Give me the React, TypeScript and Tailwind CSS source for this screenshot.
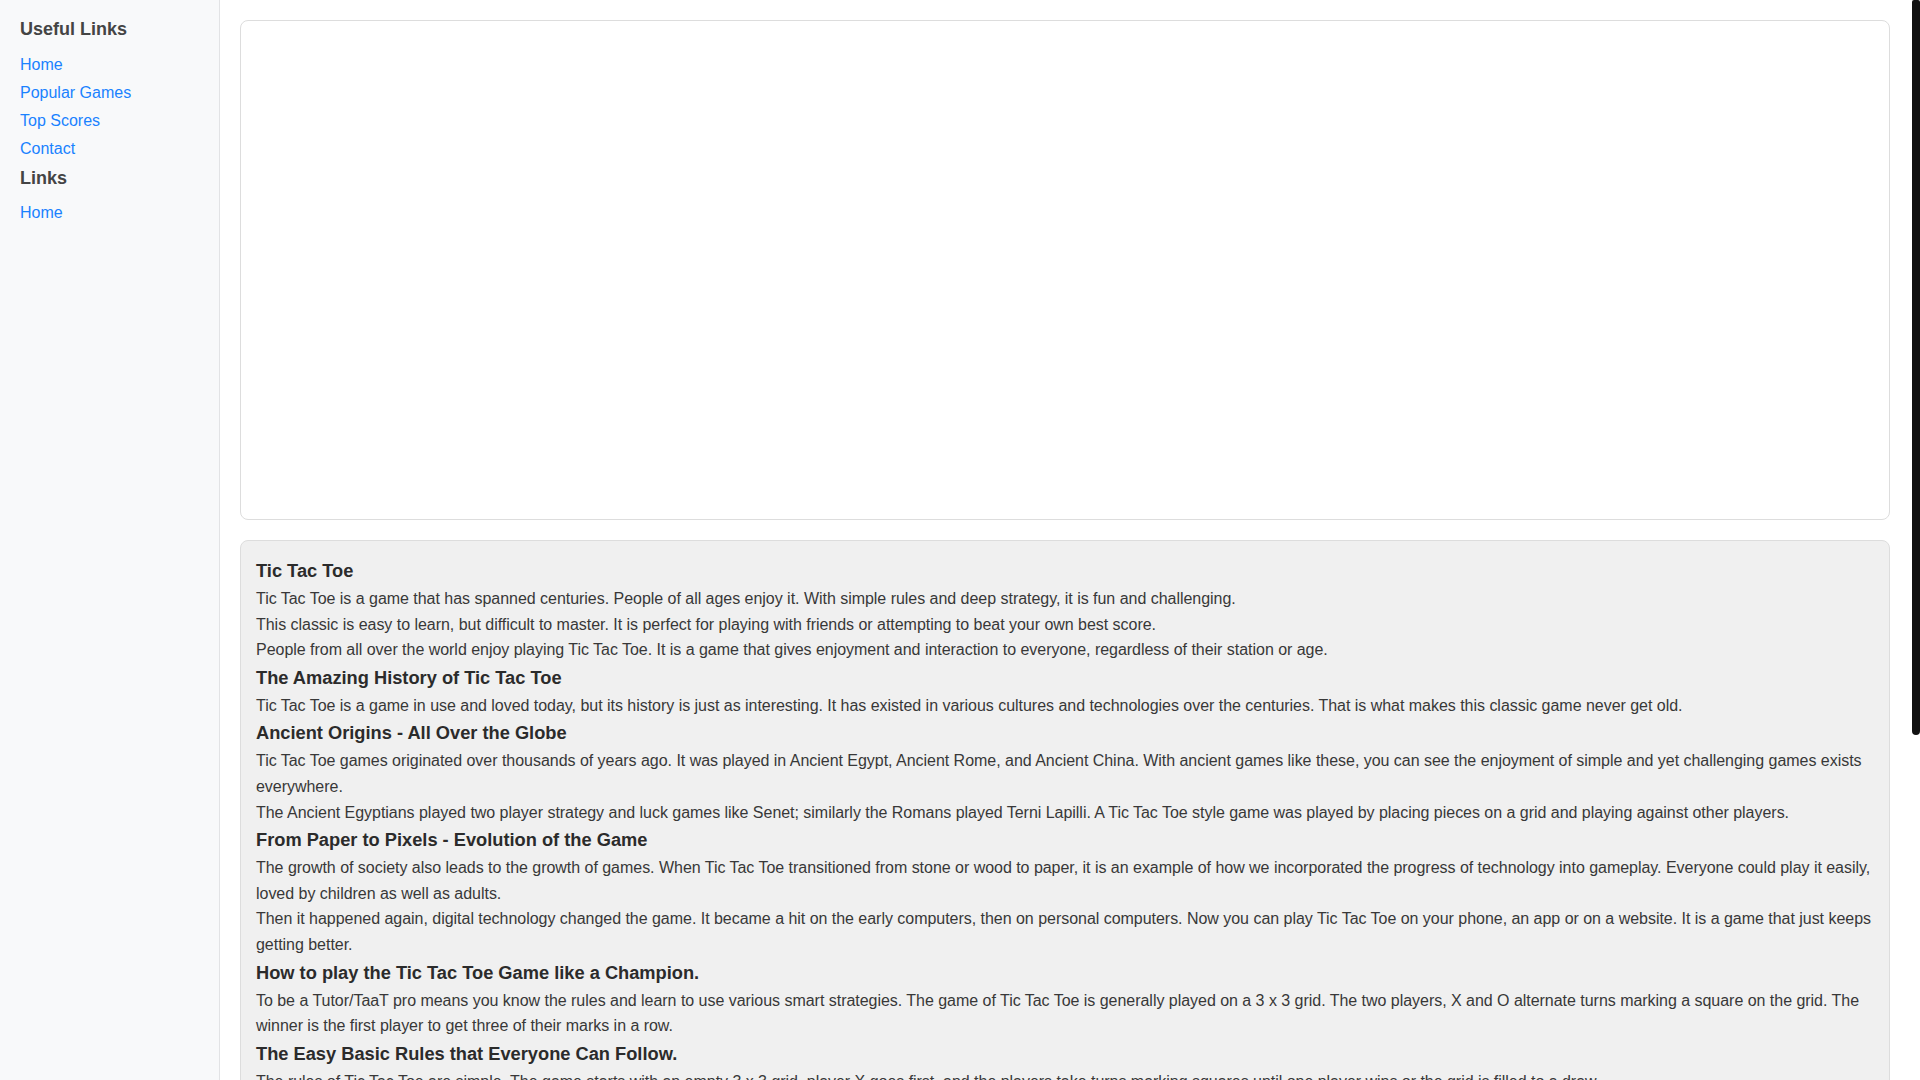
import React from "react";

type Block = { h?: string; p?: string };

const blocks: Block[] = [
  { h: "Tic Tac Toe" },
  { p: "Tic Tac Toe is a game that has spanned centuries. People of all ages enjoy it. With simple rules and deep strategy, it is fun and challenging." },
  { p: "This classic is easy to learn, but difficult to master. It is perfect for playing with friends or attempting to beat your own best score." },
  { p: "People from all over the world enjoy playing Tic Tac Toe. It is a game that gives enjoyment and interaction to everyone, regardless of their station or age." },
  { h: "The Amazing History of Tic Tac Toe" },
  { p: "Tic Tac Toe is a game in use and loved today, but its history is just as interesting. It has existed in various cultures and technologies over the centuries. That is what makes this classic game never get old." },
  { h: "Ancient Origins - All Over the Globe" },
  { p: "Tic Tac Toe games originated over thousands of years ago. It was played in Ancient Egypt, Ancient Rome, and Ancient China. With ancient games like these, you can see the enjoyment of simple and yet challenging games exists everywhere." },
  { p: "The Ancient Egyptians played two player strategy and luck games like Senet; similarly the Romans played Terni Lapilli. A Tic Tac Toe style game was played by placing pieces on a grid and playing against other players." },
  { h: "From Paper to Pixels - Evolution of the Game" },
  { p: "The growth of society also leads to the growth of games. When Tic Tac Toe transitioned from stone or wood to paper, it is an example of how we incorporated the progress of technology into gameplay. Everyone could play it easily, loved by children as well as adults." },
  { p: "Then it happened again, digital technology changed the game. It became a hit on the early computers, then on personal computers. Now you can play Tic Tac Toe on your phone, an app or on a website. It is a game that just keeps getting better." },
  { h: "How to play the Tic Tac Toe Game like a Champion." },
  { p: "To be a Tutor/TaaT pro means you know the rules and learn to use various smart strategies. The game of Tic Tac Toe is generally played on a 3 x 3 grid. The two players, X and O alternate turns marking a square on the grid. The winner is the first player to get three of their marks in a row." },
  { h: "The Easy Basic Rules that Everyone Can Follow." },
  { p: "The rules of Tic Tac Toe are simple. The game starts with an empty 3 x 3 grid, player X goes first, and the players take turns marking squares until one player wins or the grid is filled to a draw." },
  { p: "A player wins by placing three of their marks in a horizontal, vertical, or diagonal row. If all nine squares are filled and neither player has three in a row, the game ends in a draw." },
  { h: "Winning Strategies for Every Player." },
  { p: "Start in the center. The center square gives you the most ways to make a line, and it makes it harder for your opponent to block you." },
  { p: "Take the corners. Corners are the next best squares, because each one is part of three possible winning lines." },
  { p: "Always watch your opponent. Before you make your move, check whether your opponent has two marks in a row and block them if needed." },
  { p: "Create a fork. A fork is a move that gives you two ways to win at the same time, so your opponent can only block one of them." },
  { h: "Why Tic Tac Toe Is Still Popular Today." },
  { p: "Tic Tac Toe is quick to play, needs no special equipment, and can be enjoyed anywhere. It teaches logic, planning and patience, which is why parents and teachers love it as much as children do." },
  { p: "Whether you play on paper, on a board, or online against a friend or the computer, Tic Tac Toe remains one of the most loved games in the world." },
  { h: "Play Tic Tac Toe Online." },
  { p: "Challenge a friend or test your skills against the computer. Try different strategies, keep track of your best scores and see how many games in a row you can win." },
];

export default function App() {
  return (
    <div
      className="relative h-screen w-full overflow-y-auto bg-white flex"
      style={{ fontFamily: '"Liberation Sans", Arial, Helvetica, sans-serif' }}
    >
      <aside className="w-[220px] shrink-0 bg-[#f8f9fa] border-r border-[#e2e3e5] px-5 pt-[14px]">
        <h3 className="text-[18px] font-bold leading-[1.2] text-[#444444] mt-[5px] mb-[10px]">Useful Links</h3>
        <ul className="text-[16px] leading-[28px]">
          <li><a href="#" className="text-[#1a82ff]">Home</a></li>
          <li><a href="#" className="text-[#1a82ff]">Popular Games</a></li>
          <li><a href="#" className="text-[#1a82ff]">Top Scores</a></li>
          <li><a href="#" className="text-[#1a82ff]">Contact</a></li>
        </ul>
        <h3 className="text-[18px] font-bold leading-[1.2] text-[#444444] mt-[5px] mb-[10px]">Links</h3>
        <ul className="text-[16px] leading-[28px]">
          <li><a href="#" className="text-[#1a82ff]">Home</a></li>
        </ul>
      </aside>
      <main className="flex-1 min-w-0 pl-5 pt-5 pb-5 pr-[30px] self-start">
        <div className="h-[500px] bg-white border border-[#dddddd] rounded-[8px]" />
        <div className="mt-5 bg-[#f0f0f0] border border-[#dddddd] rounded-[8px] p-[15px]">
          {blocks.map((b, i) =>
            b.h ? (
              <h2 key={i} className="text-[18.25px] font-bold leading-[30px] text-[#2b2b2b]">{b.h}</h2>
            ) : (
              <p key={i} className="text-[16px] leading-[1.6] tracking-[-0.03px] text-[#383838]">{b.p}</p>
            )
          )}
        </div>
      </main>
      <div className="fixed top-0 right-0 w-[8px] h-[735px] bg-[#111111] rounded-b-[4px] rounded-t-[2px]" />
    </div>
  );
}
